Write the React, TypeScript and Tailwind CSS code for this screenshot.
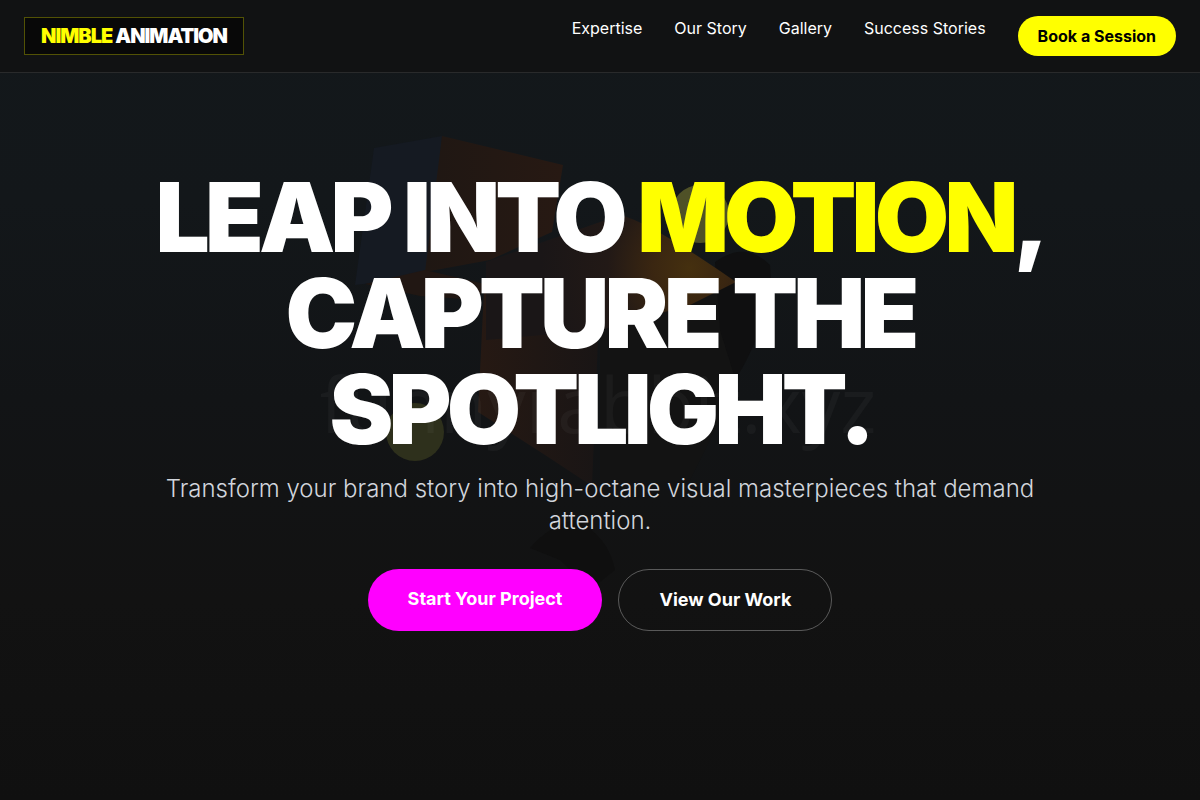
const links = ["Expertise", "Our Story", "Gallery", "Success Stories"];

const Backdrop = ()=>{
    return (
        <svg
            className="absolute inset-0 h-full w-full"
            viewBox="0 0 1200 800"
            preserveAspectRatio="xMidYMid slice"
            aria-hidden="true"
        >
            <defs>
                <linearGradient id="sky" x1="0" y1="0" x2="0" y2="1">
                    <stop offset="0" stopColor="#13181b" />
                    <stop offset="0.25" stopColor="#13171a" />
                    <stop offset="0.5" stopColor="#121416" />
                    <stop offset="0.75" stopColor="#121212" />
                    <stop offset="1" stopColor="#101010" />
                </linearGradient>
                <linearGradient id="head" x1="0" y1="0" x2="1" y2="0">
                    <stop offset="0" stopColor="#1f1713" />
                    <stop offset="1" stopColor="#271913" />
                </linearGradient>
                <radialGradient id="arm" gradientUnits="userSpaceOnUse" cx="690" cy="268" r="150">
                    <stop offset="0" stopColor="#45300f" />
                    <stop offset="0.25" stopColor="#3a2611" />
                    <stop offset="0.55" stopColor="#221916" />
                    <stop offset="1" stopColor="#1a1617" />
                </radialGradient>
                <linearGradient id="body" x1="0" y1="0" x2="1" y2="0">
                    <stop offset="0" stopColor="#261913" />
                    <stop offset="1" stopColor="#191515" />
                </linearGradient>
            </defs>
            <rect width="1200" height="800" fill="url(#sky)" />
            <path d="M374 148 L442 136 L436 200 L428 276 L355 285 Z" fill="#151a22" />
            <path d="M442 136 L563 165 L552 232 L490 260 L425 272 Z" fill="url(#head)" />
            <path d="M365 284 L425 270 L485 284 L478 300 L420 296 Z" fill="#211713" />
            <circle cx="700" cy="214" r="29" fill="#4f5127" />
            <path d="M600 290 L735 290 L745 350 L725 410 L690 480 L600 480 Z" fill="#131313" />
            <path d="M715 262 Q745 240 770 265 L772 300 Q745 370 735 378 L720 330 Z" fill="#0f0f10" />
            <path d="M484 290 L600 290 L592 486 L545 455 L478 412 Z" fill="url(#body)" />
            <path d="M486 262 L620 215 Q650 222 736 282 L690 305 L600 330 L486 340 Z" fill="url(#arm)" />
            <path d="M530 548 Q550 525 575 520 Q608 535 615 570 L590 590 L560 560 Z" fill="#0f0f0f" />
            <circle cx="415" cy="432" r="29" fill="#2e301c" />
            <text x="598" y="433" textAnchor="middle" fontSize="77" className="font-['Open_Sans',sans-serif]" fill="#ffffff" fillOpacity="0.035">funnyrabbit.xyz</text>
        </svg>
    )
}

const App = ()=>{
    return (
        <div className="relative min-h-screen bg-[#111111] font-['Inter',sans-serif] text-white">
            <Backdrop />
            <header className="relative border-b border-white/10 bg-[#111111]/80">
                <div className="flex items-center justify-between px-6 py-4">
                    <a href="#" className="border border-[#ffff00]/30 bg-[#080808] px-4 py-1 text-xl font-black tracking-tighter">
                        <span className="text-[#ffff00]">NIMBLE</span> ANIMATION
                    </a>
                    <nav className="flex gap-8">
                        {
                            links.map((link)=>(
                                <a key={link} href="#">{link}</a>
                            ))
                        }
                        <a href="#" className="rounded-full bg-[#ffff00] px-5 py-2 font-bold text-black">Book a Session</a>
                    </nav>
                </div>
            </header>
            <main className="relative mx-auto flex max-w-4xl flex-col items-center pt-24 text-center">
                <h1 className="text-8xl font-black leading-none tracking-tighter">
                    LEAP INTO <span className="text-[#ffff00]">MOTION</span>, CAPTURE THE SPOTLIGHT.
                </h1>
                <p className="mt-4 text-2xl font-light text-gray-300">
                    Transform your brand story into high-octane visual masterpieces that demand attention.
                </p>
                <div className="mt-8 flex gap-4">
                    <button className="flex rounded-full bg-[#ff00ff] px-10 py-4 text-lg font-bold">Start Your Project</button>
                    <button className="rounded-full border border-white/30 px-10 py-4 text-lg font-bold">View Our Work</button>
                </div>
            </main>
        </div>
    )
}

export default App;
